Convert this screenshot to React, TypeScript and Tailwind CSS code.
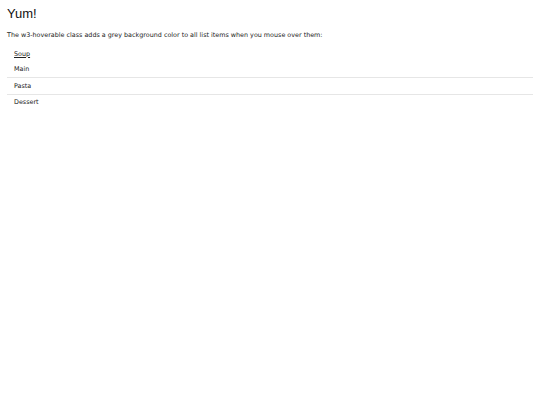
export default function App() {
  const items = [
    { label: "Soup", link: true, border: false },
    { label: "Main", link: false, border: true },
    { label: "Pasta", link: false, border: true },
    { label: "Dessert", link: false, border: false },
  ];

  return (
    <div className="min-h-screen bg-white px-[7px] text-[#222]" style={{ fontFamily: '"DejaVu Sans", Verdana, sans-serif' }}>
      <h2 className="pt-[6px] text-[13px] leading-[16px] text-[#111]" style={{ fontFamily: '"Liberation Sans", Arial, sans-serif' }}>
        Yum!
      </h2>
      <p className="mt-[8px] text-[6.4px] leading-[10px]">
        The w3-hoverable class adds a grey background color to all list items when you mouse over them:
      </p>
      <ul className="mt-[6px] text-[6.4px]">
        {items.map((item) => (
          <li
            key={item.label}
            className={`px-[7px] py-[2.5px] leading-[10.5px] ${item.border ? "border-b border-[#e6e6e6]" : ""}`}
          >
            {item.link ? <span className="underline">{item.label}</span> : item.label}
          </li>
        ))}
      </ul>
    </div>
  );
}
